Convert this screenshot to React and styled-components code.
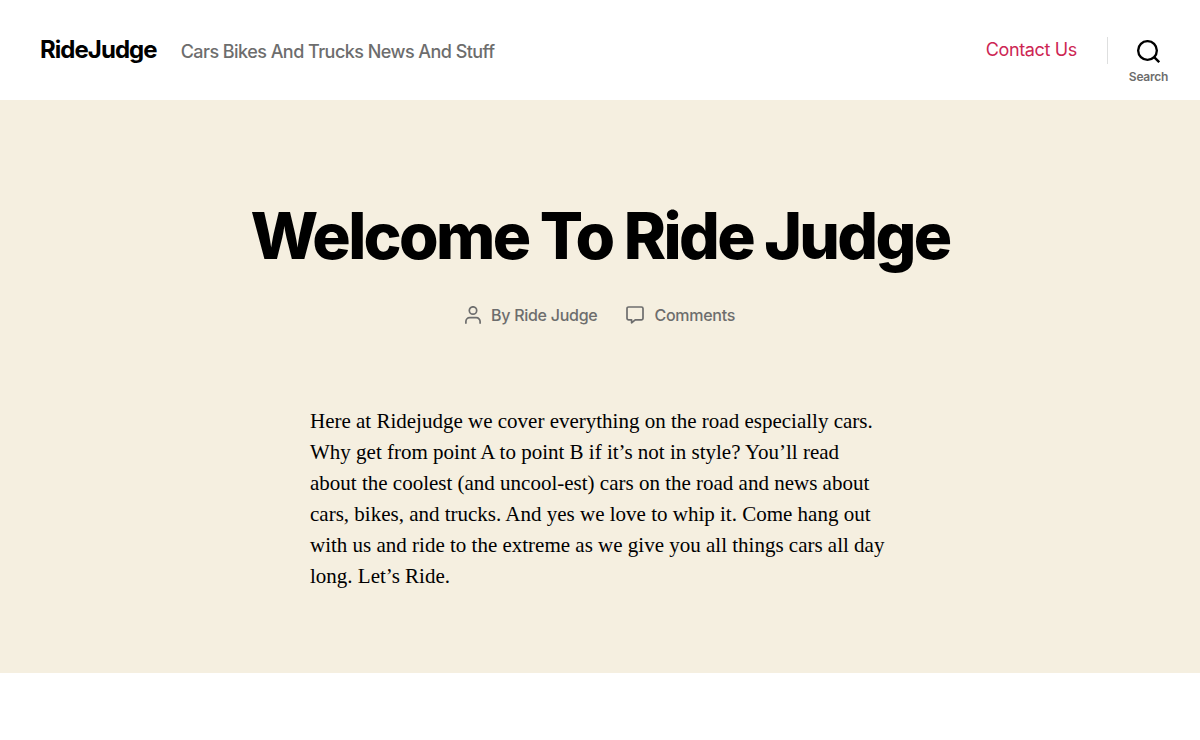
import React from 'react'
import styled, { createGlobalStyle } from 'styled-components'

const GlobalStyle = createGlobalStyle`
  *,
  *::before,
  *::after {
    box-sizing: border-box;
  }

  body {
    background-color: white;
    color: black;
    font-family: Inter, 'Liberation Sans', sans-serif;
    font-size: 18px;
    letter-spacing: -0.015em;
    margin: 0;
  }
`

const Header = styled.header`
  align-items: flex-start;
  display: flex;
  justify-content: space-between;
  padding: 36px 32px 15px 40px;
`

const Branding = styled.div`
  align-items: baseline;
  display: flex;
  flex-wrap: wrap;
  gap: 4px 24px;
`

const SiteTitle = styled.a`
  color: black;
  font-size: 24px;
  font-weight: 700;
  letter-spacing: -0.04em;
  line-height: 28px;
  text-decoration: none;
`

const Tagline = styled.p`
  color: #6d6d6d;
  font-weight: 500;
  letter-spacing: -0.03em;
  line-height: 28px;
  margin: 0;
`

const Navigation = styled.div`
  align-items: flex-start;
  display: flex;
`

const MenuLink = styled.a`
  color: #cd2653;
  letter-spacing: -0.02em;
  line-height: 28px;
  text-decoration: none;
`

const Divider = styled.span`
  background-color: #dedfdf;
  height: 27px;
  margin: 1px 21px 0 30px;
  width: 1px;
`

const SearchToggle = styled.button`
  align-items: center;
  background: none;
  border: none;
  color: #6d6d6d;
  cursor: pointer;
  display: flex;
  flex-direction: column;
  font: inherit;
  font-size: 12px;
  font-weight: 600;
  gap: 6px;
  letter-spacing: inherit;
  line-height: 16px;
  padding: 4px 0 0;

  svg {
    color: black;
  }
`

const Article = styled.article`
  background-color: #f5efe0;
  padding: 96px 20px 81px;
`

const Heading = styled.h1`
  font-size: 64px;
  font-weight: 800;
  letter-spacing: -0.0415em;
  line-height: 80px;
  margin: 0;
  text-align: center;
`

const Meta = styled.ul`
  display: flex;
  flex-wrap: wrap;
  gap: 8px 29px;
  justify-content: center;
  list-style: none;
  margin: 27px 0 0;
  padding: 0;
`

const MetaItem = styled.li`
  align-items: center;
  color: #6d6d6d;
  display: flex;
  font-size: 16px;
  font-weight: 500;
  gap: 10px;
  line-height: 24px;

  a {
    color: inherit;
    text-decoration: none;
  }
`

const Content = styled.div`
  font-family: 'Liberation Serif', serif;
  font-size: 21px;
  letter-spacing: normal;
  line-height: 31px;
  margin: 79px auto 0;
  max-width: 580px;

  p {
    margin: 0;
  }
`

const SearchIcon = () => (
  <svg width="23" height="23" viewBox="0 0 23 23" fill="none" stroke="currentColor" strokeWidth="2.33" aria-hidden="true">
    <circle cx="10.5" cy="10.5" r="9.34" />
    <path d="M16.9 16.9l5.3 5.3" />
  </svg>
)

const UserIcon = () => (
  <svg width="16" height="18" viewBox="0 0 16 18" fill="none" stroke="currentColor" strokeWidth="1.7" strokeLinecap="round" aria-hidden="true">
    <circle cx="8" cy="4.5" r="3.7" />
    <path d="M.9 17.1v-1.6a3.8 3.8 0 0 1 3.8-3.8h6.6a3.8 3.8 0 0 1 3.8 3.8v1.6" />
  </svg>
)

const CommentIcon = () => (
  <svg width="18" height="18" viewBox="0 0 18 18" fill="none" stroke="currentColor" strokeWidth="1.7" strokeLinejoin="round" aria-hidden="true">
    <path d="M2.6 1h12.8A1.6 1.6 0 0 1 17 2.6v9.6a1.6 1.6 0 0 1-1.6 1.6H9.2l-3.6 3v-3h-3A1.6 1.6 0 0 1 1 12.2V2.6A1.6 1.6 0 0 1 2.6 1z" />
  </svg>
)

const App = () => {
  return (
    <>
      <GlobalStyle />
      <Header>
        <Branding>
          <SiteTitle href="#">RideJudge</SiteTitle>
          <Tagline>Cars Bikes And Trucks News And Stuff</Tagline>
        </Branding>
        <Navigation>
          <nav>
            <MenuLink href="#contact">Contact Us</MenuLink>
          </nav>
          <Divider />
          <SearchToggle type="button">
            <SearchIcon />
            Search
          </SearchToggle>
        </Navigation>
      </Header>
      <main>
        <Article>
          <Heading>Welcome To Ride Judge</Heading>
          <Meta>
            <MetaItem>
              <UserIcon />
              <span>
                By <a href="#author">Ride Judge</a>
              </span>
            </MetaItem>
            <MetaItem>
              <CommentIcon />
              <a href="#comments">Comments</a>
            </MetaItem>
          </Meta>
          <Content>
            <p>
              Here at Ridejudge we cover everything on the road especially cars.
              Why get from point A to point B if it’s not in style? You’ll read
              about the coolest (and uncool-est) cars on the road and news about
              cars, bikes, and trucks. And yes we love to whip it. Come hang out
              with us and ride to the extreme as we give you all things cars all
              day long. Let’s Ride.
            </p>
          </Content>
        </Article>
      </main>
    </>
  )
}

export default App
